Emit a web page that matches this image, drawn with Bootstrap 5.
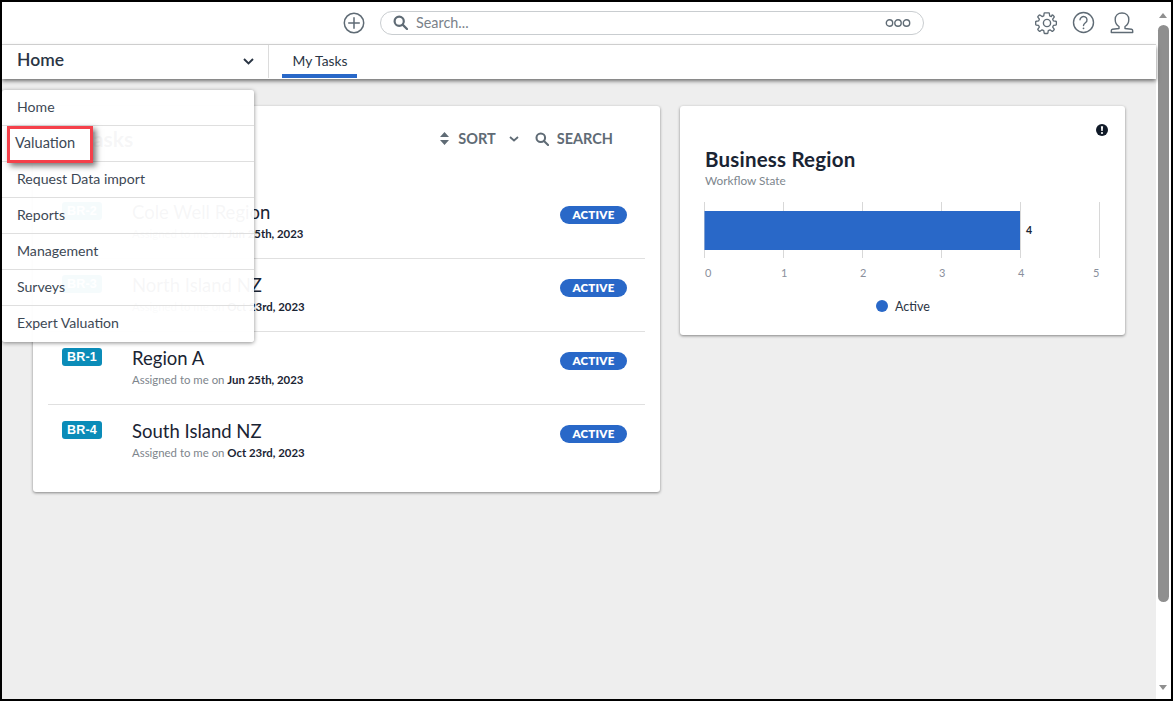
<!DOCTYPE html>
<html lang="en">
<head>
<meta charset="utf-8">
<title>My Tasks</title>
<link href="https://cdn.jsdelivr.net/npm/bootstrap@5.3.0/dist/css/bootstrap.min.css" rel="stylesheet">
<style>
html,body{height:100%;margin:0;overflow:hidden;background:#000;}
body{font-family:Lato,"Noto Sans",sans-serif;color:#1a2433;}
.frame{position:relative;height:701px;width:1173px;border:2px solid #000;background:#eee;display:flex;overflow:hidden;}
.app{flex:1 1 auto;min-width:0;display:flex;flex-direction:column;}
.topbar{height:43px;background:#fff;border-bottom:1px solid #dcdcdc;padding:0 22px 0 341px;}
.plus{margin-right:15px;margin-top:-1px;}
.searchbox{width:544px;height:24px;border:1px solid #c9cdd0;border-radius:12px;padding:0 12px;color:#7a828a;font-size:14.4px;margin-top:-1px;}
.searchbox span{flex:1;}
.tool-icons{margin-left:auto;gap:15px;margin-top:-1px;}
.gearicon{margin-right:-2px;}
.subbar{height:34px;background:#fff;box-shadow:0 2px 4px rgba(0,0,0,.55);position:relative;z-index:2;}
.homesel{width:267px;height:33px;border-right:1px solid #dcdcdc;padding:0 14px 2px 15px;font-size:17.5px;font-weight:600;color:#2a3544;}
.homesel svg{margin-top:2px;}
.tabitem{margin-left:13px;width:75px;height:33px;border-bottom:4px solid #2968c8;font-size:13.8px;color:#2a3544;text-align:center;padding:6px 0 0 1px;}
.content{flex:1;padding:27px 31px 0 31px;gap:20px;align-items:flex-start;}
.panel{background:#fff;border-radius:3px;box-shadow:0 1px 3px rgba(0,0,0,.45);}
.tasks{width:627px;height:386px;padding:0 15px;}
.taskhead{height:80px;padding:0 32px 15px 0;color:#5f6b75;font-size:14.5px;font-weight:700;}
.taskhead h2{font-size:21px;font-weight:700;margin:0 auto 0 0;color:#1a2433;}
.sorttext{margin-left:9px;}
.chev{margin-left:13px;}
.taskrow{height:73px;border-bottom:1px solid #e0e0e0;padding:16px 0 0 14px;}
.taskrow:last-child{border-bottom:0;}
.codetag{width:40px;height:18px;border-radius:3px;background:#0b8cb8;color:#fff;font:700 12.5px "Liberation Sans",sans-serif;text-align:center;line-height:18px;letter-spacing:.2px;}
.taskbody{margin-left:30px;flex:1;margin-top:-1px;}
.tasktitle{font-size:18.5px;line-height:23px;color:#1a2433;}
.taskmeta{font-size:11.4px;line-height:14px;margin-top:3px;color:#7d858c;}
.taskmeta b{color:#1a2433;font-weight:700;}
.statustag{width:67px;height:18px;margin:4px 18px 0 0;border-radius:9px;background:#2968c8;color:#fff;font-size:11.5px;font-weight:800;line-height:18px;text-align:center;letter-spacing:.2px;}
.chartcard{width:445px;height:229px;position:relative;padding:42px 24px 0 25px;}
.chartcard h3{font-size:20.5px;font-weight:700;line-height:22px;margin:0;color:#1a2433;letter-spacing:.2px;}
.chartsub{font-size:11.8px;line-height:14px;margin-top:4px;color:#7d868d;}
.alerticon{position:absolute;top:18px;right:17px;}
.chartsvg{display:block;margin:14px 0 0 -1px;}
.chartsvg text{font-family:Lato,"Noto Sans",sans-serif;}
.navmenu{position:absolute;left:0;top:88px;width:252px;background:rgba(255,255,255,.96);border-radius:3px;box-shadow:0 1px 4px rgba(0,0,0,.45);z-index:5;}
.navmenu div{height:36px;border-bottom:1px solid #dfdfdf;padding:0 15px 2px;font-size:14.1px;color:#3d4855;display:flex;align-items:center;}
.navmenu div:last-child{border-bottom:0;}
.callout{position:absolute;left:5px;top:124px;width:86px;height:37px;background:#fff;border:3px solid #f5404a;box-shadow:3px 3px 6px rgba(0,0,0,.55);z-index:6;font-size:14.6px;color:#3d4855;padding:0 0 3px 5px;display:flex;align-items:center;}
.scrolltrack{width:15px;flex:none;background:#fff;position:relative;}
.scrollthumb{position:absolute;left:2px;top:23px;width:11px;height:577px;background:#8f8f8f;border-radius:6px;}
.arrowup,.arrowdown{position:absolute;left:3px;width:0;height:0;border-left:4.5px solid transparent;border-right:4.5px solid transparent;}
.arrowup{top:11px;border-bottom:5px solid #8f8f8f;}
.arrowdown{bottom:9px;border-top:5px solid #8f8f8f;}
</style>
</head>
<body>
<div class="frame">
  <div class="app">
    <div class="topbar d-flex align-items-center">
      <svg class="plus" width="22" height="22" viewBox="0 0 22 22" fill="none" stroke="#5f6b75" stroke-width="1.5"><circle cx="11" cy="11" r="9.7"/><path d="M11 5.200v11.600M5.200 11h11.600"/></svg>
      <div class="searchbox d-flex align-items-center">
        <svg class="me-2" width="15" height="15" viewBox="0 0 15 15" fill="none" stroke="#5f6b75" stroke-width="2.2"><circle cx="6.200" cy="6.200" r="4.600"/><path d="M9.600 9.600l4.400 4.400" stroke-linecap="round"/></svg>
        <span>Search...</span>
        <svg width="26" height="8" viewBox="0 0 26 8" fill="none" stroke="#5f6b75" stroke-width="1.4"><circle cx="4.500" cy="4" r="3.200"/><circle cx="13" cy="4" r="3.200"/><circle cx="21.500" cy="4" r="3.200"/></svg>
      </div>
      <div class="tool-icons d-flex align-items-center">
        <svg class="gearicon" width="24" height="24" viewBox="0 0 24 24" fill="none" stroke="#5f6b75" stroke-width="1.4" stroke-linejoin="round"><circle cx="12" cy="12" r="3.600"/><path d="M9.800 1.500c-.3 0-.5.2-.5.500l-.4 2.700-1.800.8-2.200-1.600c-.2-.2-.5-.1-.7 0L2.700 5.400c-.2.200-.2.500-.1.700l1.600 2.200-.8 1.800-2.600.400c-.3 0-.5.300-.5.500v3c0 .3.200.5.500.5l2.600.4.800 1.800-1.600 2.200c-.1.200-.1.500.1.700l1.500 1.500c.2.200.5.200.7.100l2.200-1.600 1.800.8.400 2.600c0 .3.200.5.500.5h3c.3 0 .5-.2.500-.5l.4-2.600 1.800-.8 2.200 1.600c.2.100.5.100.7-.1l1.500-1.500c.2-.2.200-.5.100-.7l-1.600-2.200.8-1.800 2.600-.4c.3 0 .5-.2.500-.5v-3c0-.2-.2-.5-.5-.5l-2.600-.4-.8-1.800 1.600-2.200c.1-.2.100-.5-.1-.7l-1.500-1.500c-.2-.1-.5-.2-.7 0L17 5.500l-1.800-.8-.4-2.700c0-.3-.2-.5-.5-.5z" transform="translate(.4 .4) scale(.94)"/></svg>
        <svg width="23" height="23" viewBox="0 0 23 23" fill="none" stroke="#5f6b75" stroke-width="1.4"><circle cx="11.500" cy="11.500" r="10"/><path d="M8 8.800a3.500 3.300 0 1 1 5.600 2.700c-1.300 1-2.100 1.500-2.100 3" stroke-linecap="round"/><circle cx="11.500" cy="17.300" r=".9" fill="#5f6b75" stroke="none"/></svg>
        <svg width="24" height="24" viewBox="0 0 24 24" fill="none" stroke="#5f6b75" stroke-width="1.4" stroke-linejoin="round"><path d="M9 15.500c-2.500-1.500-3.800-4-3.800-7C5.200 4.500 8 2 12 2s6.800 2.500 6.800 6.500c0 3-1.300 5.500-3.800 7v2l6.500.8c.8.200 1.200.7 1.200 1.400v1.800H1.300v-1.800c0-.7.400-1.200 1.200-1.400L9 17.500z"/></svg>
      </div>
    </div>
    <div class="subbar d-flex">
      <div class="homesel d-flex align-items-center justify-content-between">
        <span>Home</span>
        <svg width="11" height="7" viewBox="0 0 11 7" fill="none" stroke="#2a3544" stroke-width="1.9"><path d="M1 1l4.500 4.500L10 1"/></svg>
      </div>
      <div class="tabitem">My Tasks</div>
    </div>
    <div class="content d-flex">
      <section class="panel tasks">
        <div class="taskhead d-flex align-items-center">
          <h2>My Tasks</h2>
          <svg width="9" height="13" viewBox="0 0 9 13" fill="#5f6b75"><path d="M4.500 0L9 5H0zM4.500 13L0 8h9z"/></svg>
          <span class="sorttext">SORT</span>
          <svg class="chev" width="10" height="6" viewBox="0 0 10 6" fill="none" stroke="#5f6b75" stroke-width="1.8"><path d="M1 1l4 3.500L9 1"/></svg>
          <svg class="ms-3 me-2" width="14" height="14" viewBox="0 0 15 15" fill="none" stroke="#5f6b75" stroke-width="2.2"><circle cx="6.200" cy="6.200" r="4.600"/><path d="M9.600 9.600l4.400 4.400" stroke-linecap="round"/></svg>
          <span>SEARCH</span>
        </div>
        <div class="taskrow d-flex">
          <div class="codetag">BR-2</div>
          <div class="taskbody"><div class="tasktitle">Cole Well Region</div><div class="taskmeta">Assigned to me on <b>Jun 25th, 2023</b></div></div>
          <div class="statustag">ACTIVE</div>
        </div>
        <div class="taskrow d-flex">
          <div class="codetag">BR-3</div>
          <div class="taskbody"><div class="tasktitle">North Island NZ</div><div class="taskmeta">Assigned to me on <b>Oct 23rd, 2023</b></div></div>
          <div class="statustag">ACTIVE</div>
        </div>
        <div class="taskrow d-flex">
          <div class="codetag">BR-1</div>
          <div class="taskbody"><div class="tasktitle">Region A</div><div class="taskmeta">Assigned to me on <b>Jun 25th, 2023</b></div></div>
          <div class="statustag">ACTIVE</div>
        </div>
        <div class="taskrow d-flex">
          <div class="codetag">BR-4</div>
          <div class="taskbody"><div class="tasktitle">South Island NZ</div><div class="taskmeta">Assigned to me on <b>Oct 23rd, 2023</b></div></div>
          <div class="statustag">ACTIVE</div>
        </div>
      </section>
      <section class="panel chartcard">
        <svg class="alerticon" width="12" height="12" viewBox="0 0 12 12"><circle cx="6" cy="6" r="6" fill="#101a28"/><path d="M4.900 2.300h2.200l-.4 4.800H5.300z" fill="#fff"/><circle cx="6" cy="9" r="1.100" fill="#fff"/></svg>
        <h3>Business Region</h3>
        <div class="chartsub">Workflow State</div>
        <svg class="chartsvg" width="400" height="124" viewBox="0 0 400 124">
          <g stroke="#d8d8d8" stroke-width="1">
            <path d="M0.500 0v56M79.500 0v56M158.500 0v56M237.500 0v56M316.500 0v56M395.500 0v56"/>
          </g>
          <rect x="0.500" y="9" width="315.500" height="39" fill="#2968c8"/>
          <text x="322" y="32" font-size="10.500" font-weight="700" fill="#1a2433">4</text>
          <g font-size="11" fill="#8a8f9c">
            <text x="1" y="75">0</text><text x="77" y="75">1</text><text x="156" y="75">2</text><text x="235" y="75">3</text><text x="314" y="75">4</text><text x="389" y="75">5</text>
          </g>
          <circle cx="178" cy="104" r="6" fill="#2968c8"/>
          <text x="191" y="108.500" font-size="12.500" fill="#2a3544">Active</text>
        </svg>
      </section>
    </div>
  </div>
  <div class="scrolltrack">
    <div class="arrowup"></div>
    <div class="scrollthumb"></div>
    <div class="arrowdown"></div>
  </div>
  <nav class="navmenu">
    <div>Home</div>
    <div>&nbsp;</div>
    <div>Request Data import</div>
    <div>Reports</div>
    <div>Management</div>
    <div>Surveys</div>
    <div>Expert Valuation</div>
  </nav>
  <div class="callout">Valuation</div>
</div>
<script src="https://cdn.jsdelivr.net/npm/bootstrap@5.3.0/dist/js/bootstrap.bundle.min.js"></script>
</body>
</html>
